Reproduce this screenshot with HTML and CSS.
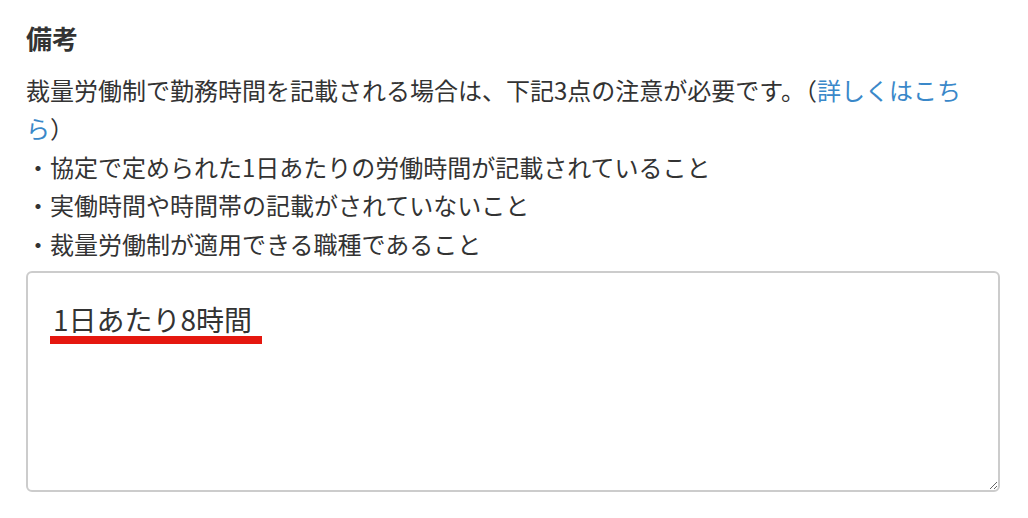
FILE: index.html
```html
<!DOCTYPE html>
<html>
  <head>
    <title>備考</title>
    <link rel="stylesheet" href="styles.css">
  </head>
  <body>
    <div class="container">
      <h2>備考</h2>
      <p class="note">
        裁量労働制で勤務時間を記載される場合は、下記3点の注意が必要です。（<a href="#" class="link">詳しくはこちら</a>）<br>
        ・協定で定められた1日あたりの労働時間が記載されていること<br>
        ・実働時間や時間帯の記載がされていないこと<br>
        ・裁量労働制が適用できる職種であること
      </p>
      <div class="field">
        <textarea class="memo" id="memo">1日あたり8時間</textarea>
        <span class="mark"></span>
      </div>
    </div>
  </body>
</html>
```
FILE: styles.css
```css
body {
  margin: 0;
  font-family: "Noto Sans CJK JP", "Noto Sans", sans-serif;
  color: #333;
  background-color: #fff;
}
.container {
  width: 974px;
  padding: 19px 0 0 26px;
}
h2 {
  margin: 0;
  font-size: 26px;
  line-height: 37.5px;
  font-weight: bold;
}
.note {
  margin: 14px 0 0;
  width: 945px;
  font-size: 24px;
  line-height: 38.5px;
}
.link {
  color: #3a88c9;
  text-decoration: none;
}
.field {
  position: relative;
  margin-top: 8px;
}
.memo {
  display: block;
  width: 100%;
  height: 221px;
  box-sizing: border-box;
  padding: 26px 25px;
  border: 2px solid #ccc;
  border-radius: 6px;
  font-family: "Noto Sans CJK JP", "Noto Sans", sans-serif;
  font-size: 28px;
  line-height: 40px;
  color: #333;
  outline: none;
}
.mark {
  position: absolute;
  left: 24px;
  top: 65px;
  width: 212px;
  height: 8px;
  background-color: #e5170f;
}
```
